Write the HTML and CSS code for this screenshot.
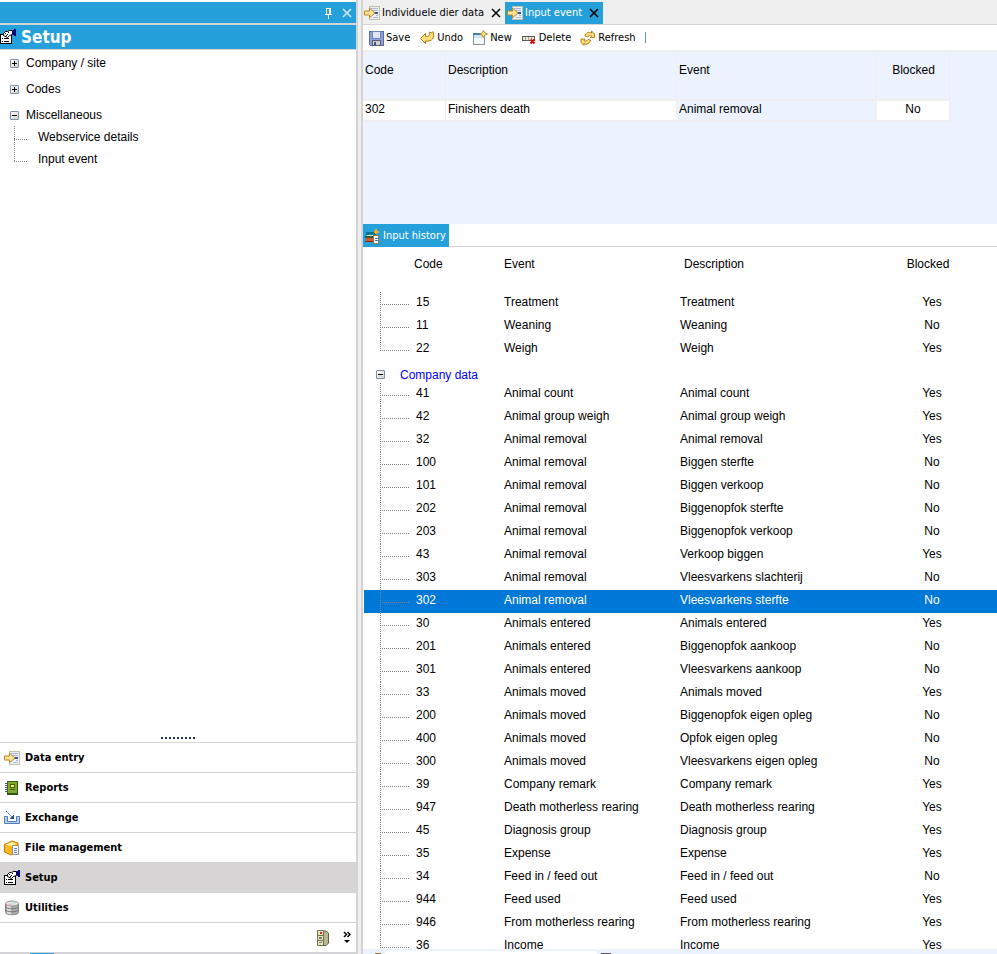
FILE: index.html
```html
<!DOCTYPE html>
<html lang="en">
<head>
<meta charset="utf-8">
<title>Setup - Input event</title>
<link rel="stylesheet" href="styles.css">
</head>
<body>
<svg class="sprite" aria-hidden="true">
  <symbol id="i-setup" viewBox="0 0 16 16" shape-rendering="crispEdges">
    <path fill="#fff" d="M1 5h10v10H1z"/><path fill="none" stroke="#000" d="M.5 5.500h11v9H.5z"/>
    <path fill="#fff" stroke="#000" shape-rendering="auto" d="M3.500 4.500l2-2h2l2-1h3v4l-3 1-2 2-4-2z"/>
    <path stroke="#000" fill="none" d="M5 4.500h1M7 5.500h1M6 6.500h1M8 3.500h1"/>
    <path stroke="#000" fill="none" d="M2 9.500h1M4 9.500h5M2 12.500h1M4 12.500h5"/>
    <path fill="#00008b" d="M13 1h1V0h2v7h-2V6h-1z"/>
  </symbol>
  <symbol id="i-entry" viewBox="0 0 16 16" shape-rendering="crispEdges">
    <path fill="#e9eef8" d="M5 1h10v14H5z"/><path fill="none" stroke="#c9c3a6" d="M5.500 1.500h10v13h-10z"/>
    <path stroke="#a9bbdc" fill="none" d="M7 3.500h7M8 5.500h6M12 10.500h2M9 12.500h5"/>
    <path fill="#2c5c9d" d="M11 7h3v2h-3z"/>
    <path shape-rendering="auto" fill="#ffe49a" stroke="#c08422" d="M.5 6h5V3.200L11 8l-5.500 4.800V10h-5z"/>
  </symbol>
  <symbol id="i-report" viewBox="0 0 16 16" shape-rendering="crispEdges">
    <path fill="#80a82c" stroke="#43661b" d="M3.500 1.500h10v12h-10z"/><path fill="#2e5613" d="M3 13h11v2H3zM13 2h1v12h-1z"/>
    <path fill="#ffeb64" stroke="#4b6110" d="M6.500 4.500h4v3h-4z"/><path stroke="#4b6110" d="M6 9.500h5"/>
    <path stroke="#555" d="M1 3.500h3M1 5.500h3M1 7.500h3M1 9.500h3M1 11.500h3"/>
  </symbol>
  <symbol id="i-exchange" viewBox="0 0 16 16">
    <path fill="#b7cdea" stroke="#527fb5" d="M.5 6.500h3v5h9v-5h3v7H.5z"/>
    <path stroke="#28649b" stroke-dasharray="1.500 1" d="M2 1l6 6"/><path fill="#1c548d" d="M10 4.500V9H5.500z"/>
  </symbol>
  <symbol id="i-file" viewBox="0 0 16 16">
    <path fill="#ffba20" stroke="#c77c05" d="M.5 4.500L8 1l6 2v8l-7 4-6.500-3z"/><path fill="#fff0a0" d="M1.500 4.500L8 2l5 1.500L7.500 6z"/>
    <path fill="#f39a0b" d="M7.500 6.500L14 4v7l-6.500 4z"/>
    <path fill="#f1f5fc" stroke="#9a9687" d="M8.500 5.500h6v9h-6z"/><path stroke="#6086c4" d="M10 8.500h3M10 10.500h3M10 12.500h3"/>
  </symbol>
  <symbol id="i-db" viewBox="0 0 16 16">
    <path fill="#aaa" stroke="#888" d="M1.500 3.500v9c0 3 13 3 13 0v-9"/>
    <path fill="#dcdcdc" d="M3 5h4v9.500l-4-1z"/><ellipse cx="8" cy="3.500" rx="6.500" ry="2.500" fill="#e3e3e3" stroke="#929292"/>
    <path fill="#a9dce2" d="M8 3.500l5-1.500-3-1z"/><path fill="#edb7b9" d="M8 3.500L3 5l3 1z"/>
    <path fill="none" stroke="#777" d="M1.500 6.500c0 3 13 3 13 0M1.500 9.500c0 3 13 3 13 0"/>
  </symbol>
  <symbol id="i-save" viewBox="0 0 16 16" shape-rendering="crispEdges">
    <path fill="#8b9fd9" stroke="#5a6ba8" d="M1.500 1.500h14v14h-13l-1-1z"/><path fill="#dfe3f3" stroke="#7386b7" d="M4.500 1.500h8v7h-8z"/>
    <path fill="#d2d2c7" stroke="#555f78" d="M4.500 10.500h8v5h-8z"/><path fill="#40528f" d="M6 12h2v3H6z"/>
  </symbol>
  <symbol id="i-undo" viewBox="0 0 16 16">
    <path fill="#ffe07a" stroke="#b27b13" d="M1.500 8.500l5-5v3c3 .5 4.500-.5 4-4.500l2 1 1.500-1.500c2 6-.5 10.500-7.500 9.500v2.500z"/>
  </symbol>
  <symbol id="i-new" viewBox="0 0 16 16" shape-rendering="crispEdges">
    <path fill="#f3f8fd" stroke="#8d9690" d="M1.500 3.500h11v11h-11z"/><path fill="#3f7db6" d="M1 3h9v2H1z"/>
    <path fill="#cfe4f6" d="M2 5h9v3H2z"/>
    <path shape-rendering="auto" fill="#ffe88b" stroke="#b68a24" d="M11.500.5l1.200 2.300 2.800 1.200-2.800 1.200-1.200 2.300-1.200-2.300L7.500 4l2.800-1.200z"/>
  </symbol>
  <symbol id="i-delete" viewBox="0 0 16 16" shape-rendering="crispEdges">
    <path fill="#e9eadb" stroke="#5b5d4e" d="M1.500 6.500h12v4h-12z"/><path stroke="#a2a492" d="M4.500 7v3M7.500 7v3M10.500 7v3"/>
    <path shape-rendering="auto" stroke="#e00d12" stroke-width="2" d="M9.500 9.500l4 4M13.500 9.500l-4 4"/>
  </symbol>
  <symbol id="i-refresh" viewBox="0 0 16 16">
    <path fill="#ffe07a" stroke="#b27b13" d="M5 6c1-3.500 4-4.500 6.500-3V1l3 3v3.500h-4l1-1.500c-1.500-1-3-.5-4 1zM10.500 10c-1 4-4 5-6.500 3.500v2l-3-3V9h4l-1 1.500c1.500 1 3 .5 4-1z"/>
  </symbol>
  <symbol id="i-history" viewBox="0 0 16 16" shape-rendering="crispEdges">
    <path fill="#0c7690" d="M1 4h10v3H1z"/><path fill="#e8e5c5" d="M2 7h8v1H2z"/><path fill="#285e37" d="M0 8h10v2H0z"/>
    <path fill="#da5525" d="M1 10h9v3H1z"/><path fill="#8a2b13" d="M0 13h10v1H0z"/>
    <path fill="#f5ad1c" d="M10 1h2v2h2v2h-2v1h-2V5H9V3h1z"/>
    <path fill="#fff" stroke="#8c7d50" d="M8.500 7.500h5v8h-5z"/><path stroke="#417cb7" d="M10 10.500h3M10 12.500h3"/>
  </symbol>
  <symbol id="i-cabinet" viewBox="0 0 16 16">
    <path fill="#b9b78f" stroke="#5e5d3f" d="M8 1h3l2.500 2v10L11 15.500H8z"/><path fill="#e8e6c5" stroke="#74724e" d="M2.500.5h6v15h-6z"/>
    <path stroke="#74724e" d="M3 5.500h5M3 10.500h5"/><path fill="#e82b1d" d="M5 2h2v2H5z"/><path fill="#777" d="M4 7h3v2H4zM4 12h3v1H4z"/>
  </symbol>
  <symbol id="i-x" viewBox="0 0 10 10"><path fill="none" stroke="currentColor" stroke-width="1.500" d="M1 1l8 8M9 1L1 9"/></symbol>
  <symbol id="i-pin" viewBox="0 0 8 12" shape-rendering="crispEdges"><path fill="none" stroke="#fff" d="M2.500 7V1.500h4V7M5.500 1v6M1 7.500h7M4.500 8v4"/></symbol>
  <symbol id="i-more" viewBox="0 0 8 13"><path fill="none" stroke="#000" stroke-width="1.500" d="M1 1l2.500 2.500L1 6M4.500 1L7 3.500 4.500 6"/><path d="M1 9h6l-3 3z"/></symbol>
</svg>

<div class="app">
  <aside class="side">
    <div class="dockbar">
      <button aria-label="Pin"><svg class="pin"><use href="#i-pin"/></svg></button>
      <button aria-label="Close panel"><svg class="cross"><use href="#i-x"/></svg></button>
    </div>
    <h1 class="side-title"><svg class="ico"><use href="#i-setup"/></svg>Setup</h1>
    <ul class="tree">
      <li><button class="node"><span class="box plus"></span>Company / site</button></li>
      <li><button class="node"><span class="box plus"></span>Codes</button></li>
      <li><button class="node"><span class="box"></span>Miscellaneous</button>
        <ul class="leaves">
          <li><a href="#webservice">Webservice details</a></li>
          <li><a href="#input-event">Input event</a></li>
        </ul>
      </li>
    </ul>
    <div class="grip"></div>
    <nav class="nav">
      <button><svg class="ico"><use href="#i-entry"/></svg>Data entry</button>
      <button><svg class="ico"><use href="#i-report"/></svg>Reports</button>
      <button><svg class="ico"><use href="#i-exchange"/></svg>Exchange</button>
      <button><svg class="ico"><use href="#i-file"/></svg>File management</button>
      <button class="current"><svg class="ico"><use href="#i-setup"/></svg>Setup</button>
      <button><svg class="ico"><use href="#i-db"/></svg>Utilities</button>
    </nav>
    <div class="side-foot">
      <button aria-label="Archive"><svg class="ico"><use href="#i-cabinet"/></svg></button>
      <button aria-label="More"><svg class="more"><use href="#i-more"/></svg></button>
    </div>
    <div class="side-edge"></div>
  </aside>

  <main class="main">
    <div class="tabs">
      <div class="tab"><button><svg class="ico"><use href="#i-entry"/></svg>Individuele dier data</button><button aria-label="Close Individuele dier data"><svg class="cross"><use href="#i-x"/></svg></button></div>
      <div class="tab active"><button><svg class="ico"><use href="#i-entry"/></svg>Input event</button><button aria-label="Close Input event"><svg class="cross"><use href="#i-x"/></svg></button></div>
    </div>
    <div class="toolbar">
      <button><svg class="ico"><use href="#i-save"/></svg>Save</button>
      <button><svg class="ico"><use href="#i-undo"/></svg>Undo</button>
      <button><svg class="ico"><use href="#i-new"/></svg>New</button>
      <button><svg class="ico"><use href="#i-delete"/></svg>Delete</button>
      <button><svg class="ico"><use href="#i-refresh"/></svg>Refresh</button>
      <span class="sep"></span>
    </div>
    <form class="editor">
      <div class="field"><label for="code">Code</label><input id="code" value="302"></div>
      <div class="field"><label for="desc">Description</label><input id="desc" value="Finishers death"></div>
      <div class="field"><label for="event">Event</label><input id="event" class="fixed" value="Animal removal" readonly></div>
      <div class="field mid"><label for="blocked">Blocked</label><input id="blocked" value="No"></div>
    </form>
    <div class="subtabs"><button><svg class="ico"><use href="#i-history"/></svg>Input history</button></div>
    <div class="history">
      <table>
        <colgroup><col class="c-tree"><col class="c-code"><col class="c-event"><col class="c-desc"><col class="c-block"><col></colgroup>
        <thead><tr><td></td><th>Code</th><th>Event</th><th>Description</th><th>Blocked</th><td></td></tr></thead>
        <tbody>
          <tr><td></td><td>15</td><td>Treatment</td><td>Treatment</td><td>Yes</td><td></td></tr>
          <tr><td></td><td>11</td><td>Weaning</td><td>Weaning</td><td>No</td><td></td></tr>
          <tr class="last"><td></td><td>22</td><td>Weigh</td><td>Weigh</td><td>Yes</td><td></td></tr>
        </tbody>
        <tbody>
          <tr class="group"><th colspan="6"><button><span class="box"></span>Company data</button></th></tr>
          <tr><td></td><td>41</td><td>Animal count</td><td>Animal count</td><td>Yes</td><td></td></tr>
          <tr><td></td><td>42</td><td>Animal group weigh</td><td>Animal group weigh</td><td>Yes</td><td></td></tr>
          <tr><td></td><td>32</td><td>Animal removal</td><td>Animal removal</td><td>Yes</td><td></td></tr>
          <tr><td></td><td>100</td><td>Animal removal</td><td>Biggen sterfte</td><td>No</td><td></td></tr>
          <tr><td></td><td>101</td><td>Animal removal</td><td>Biggen verkoop</td><td>No</td><td></td></tr>
          <tr><td></td><td>202</td><td>Animal removal</td><td>Biggenopfok sterfte</td><td>No</td><td></td></tr>
          <tr><td></td><td>203</td><td>Animal removal</td><td>Biggenopfok verkoop</td><td>No</td><td></td></tr>
          <tr><td></td><td>43</td><td>Animal removal</td><td>Verkoop biggen</td><td>Yes</td><td></td></tr>
          <tr><td></td><td>303</td><td>Animal removal</td><td>Vleesvarkens slachterij</td><td>No</td><td></td></tr>
          <tr class="selected"><td></td><td>302</td><td>Animal removal</td><td>Vleesvarkens sterfte</td><td>No</td><td></td></tr>
          <tr><td></td><td>30</td><td>Animals entered</td><td>Animals entered</td><td>Yes</td><td></td></tr>
          <tr><td></td><td>201</td><td>Animals entered</td><td>Biggenopfok aankoop</td><td>No</td><td></td></tr>
          <tr><td></td><td>301</td><td>Animals entered</td><td>Vleesvarkens aankoop</td><td>No</td><td></td></tr>
          <tr><td></td><td>33</td><td>Animals moved</td><td>Animals moved</td><td>Yes</td><td></td></tr>
          <tr><td></td><td>200</td><td>Animals moved</td><td>Biggenopfok eigen opleg</td><td>No</td><td></td></tr>
          <tr><td></td><td>400</td><td>Animals moved</td><td>Opfok eigen opleg</td><td>No</td><td></td></tr>
          <tr><td></td><td>300</td><td>Animals moved</td><td>Vleesvarkens eigen opleg</td><td>No</td><td></td></tr>
          <tr><td></td><td>39</td><td>Company remark</td><td>Company remark</td><td>Yes</td><td></td></tr>
          <tr><td></td><td>947</td><td>Death motherless rearing</td><td>Death motherless rearing</td><td>Yes</td><td></td></tr>
          <tr><td></td><td>45</td><td>Diagnosis group</td><td>Diagnosis group</td><td>Yes</td><td></td></tr>
          <tr><td></td><td>35</td><td>Expense</td><td>Expense</td><td>Yes</td><td></td></tr>
          <tr><td></td><td>34</td><td>Feed in / feed out</td><td>Feed in / feed out</td><td>No</td><td></td></tr>
          <tr><td></td><td>944</td><td>Feed used</td><td>Feed used</td><td>Yes</td><td></td></tr>
          <tr><td></td><td>946</td><td>From motherless rearing</td><td>From motherless rearing</td><td>Yes</td><td></td></tr>
          <tr class="last"><td></td><td>36</td><td>Income</td><td>Income</td><td>Yes</td><td></td></tr>
        </tbody>
      </table>
    </div>
    <div class="status"><i class="tip amber"></i><span></span><i class="tip grey"></i></div>
  </main>
</div>
</body>
</html>
```
FILE: styles.css
```css
:root {
  --blue: #26a0da;
  --line: #d4d4d6;
  --pale: #ecf3fe;
  --chrome: #efeff0;
  --ui: "DejaVu Sans Condensed", Tahoma, sans-serif;
}
* { box-sizing: border-box; }
body {
  margin: 0;
  background: var(--chrome);
  color: #000;
  font: 12px/16px "Liberation Sans", Arial, sans-serif;
}
button, input { font: inherit; color: inherit; }
button {
  display: flex;
  align-items: center;
  padding: 0;
  border: 0;
  background: none;
  white-space: nowrap;
}
a { color: inherit; text-decoration: none; }
ul { margin: 0; padding: 0; list-style: none; }
.sprite { position: absolute; width: 0; height: 0; }
.ico { width: 16px; height: 16px; flex: none; }
.cross { width: 10px; height: 10px; }
.pin { width: 8px; height: 12px; }
.more { width: 8px; height: 13px; }

.app {
  display: grid;
  grid-template-columns: 358px minmax(0, 1fr);
  gap: 3px;
  height: 100vh;
  overflow: hidden;
}

/* Left panel */
.side {
  display: flex;
  flex-direction: column;
  min-height: 0;
  padding-top: 2px;
  background: #fff;
  border-right: 2px solid var(--line);
}
.dockbar {
  display: flex;
  justify-content: flex-end;
  gap: 10px;
  height: 21px;
  padding-right: 4px;
  background: var(--blue);
  color: #d5ebf6;
}
.side-title {
  display: flex;
  align-items: center;
  gap: 5px;
  height: 27px;
  margin: 0;
  border-top: 2px solid var(--line);
  border-bottom: 1px solid var(--line);
  background: var(--blue);
  color: #fff;
  font: bold 17px/20px var(--ui);
}
.tree { flex: 1; min-height: 0; }
.node { gap: 7px; height: 26px; padding-left: 10px; }
.box {
  width: 9px;
  height: 9px;
  flex: none;
  border: 1px solid #7b91ad;
  border-radius: 1px;
  background:
    linear-gradient(#000, #000) center / 5px 1px no-repeat,
    linear-gradient(135deg, #fff, #d4d0c8);
}
.box.plus {
  background:
    linear-gradient(#000, #000) center / 5px 1px no-repeat,
    linear-gradient(#000, #000) center / 1px 5px no-repeat,
    linear-gradient(135deg, #fff, #d4d0c8);
}
.leaves { margin: -2px 0 0 14px; }
.leaves li {
  height: 22px;
  padding-left: 24px;
  line-height: 22px;
  background:
    repeating-linear-gradient(#808080 0 1px, transparent 1px 2px) 0 0 / 1px 100% no-repeat,
    repeating-linear-gradient(90deg, #808080 0 1px, transparent 1px 2px) 0 13px / 13px 1px no-repeat;
}
.leaves li:last-child { background-size: 1px 13px, 13px 1px; }
.grip {
  align-self: center;
  width: 34px;
  height: 2px;
  margin-bottom: 3px;
  background: repeating-linear-gradient(90deg, #26304e 0 2px, transparent 2px 4px);
}
.nav { font: bold 11px/16px var(--ui); }
.nav button {
  gap: 5px;
  width: 100%;
  height: 30px;
  padding-left: 4px;
  border-top: 1px solid var(--line);
}
.nav .current { background: #d6d4d5; }
.side-foot {
  display: flex;
  justify-content: flex-end;
  gap: 12px;
  height: 30px;
  padding-right: 5px;
  border-top: 1px solid var(--line);
}
.side-edge {
  height: 2px;
  background: linear-gradient(var(--blue), var(--blue)) 30px 1px / 24px 1px no-repeat, var(--line);
}

/* Right panel */
.main {
  display: flex;
  flex-direction: column;
  min-height: 0;
  padding-top: 2px;
  border-left: 2px solid var(--line);
}
.tabs {
  display: flex;
  height: 23px;
  border-bottom: 1px solid var(--line);
  font: 11px/16px var(--ui);
}
.tab { display: flex; gap: 7px; padding: 0 4px 0 1px; }
.tab button { gap: 2px; }
.tab.active { padding-left: 2px; background: var(--blue); color: #fff; }
.tab.active .cross { color: #000; }
.toolbar {
  display: flex;
  align-items: center;
  gap: 9px;
  height: 25px;
  padding-left: 5px;
  background: #fff;
  font: 11px/16px var(--ui);
}
.toolbar button { gap: 2px; }
.sep { width: 1px; height: 11px; background: #6d8fbd; }
.editor {
  display: grid;
  grid-template-columns: 83px 231px 200px 73px;
  height: 174px;
  padding-top: 2px;
  border-top: 2px solid var(--chrome);
  background: var(--pale);
  align-items: start;
}
.field {
  display: flex;
  flex-direction: column;
  border-right: 1px solid var(--chrome);
  border-bottom: 2px solid var(--chrome);
}
.field label {
  height: 47px;
  padding: 8px 1px 0 2px;
  border-bottom: 2px solid var(--chrome);
}
.field input {
  width: 100%;
  height: 19px;
  padding: 0 2px 3px;
  border: 0;
  background: #fff;
}
.field .fixed { background: var(--pale); }
.mid { text-align: center; }
.mid input { text-align: center; }
.subtabs {
  height: 23px;
  border-bottom: 1px solid var(--line);
  background: #fff;
  font: 11px/16px var(--ui);
}
.subtabs button {
  gap: 2px;
  height: 23px;
  padding: 0 3px 0 2px;
  background: var(--blue);
  color: #fff;
}
.history {
  flex: 1;
  min-height: 0;
  overflow: hidden;
  padding-left: 1px;
  background: #fff;
}
table { width: 100%; border-collapse: collapse; table-layout: fixed; }
.c-tree { width: 50px; }
.c-code { width: 90px; }
.c-event { width: 176px; }
.c-desc { width: 216px; }
.c-block { width: 72px; }
td, th {
  height: 23px;
  padding: 0 0 4px 2px;
  text-align: left;
  font-weight: normal;
  line-height: 14px;
  white-space: nowrap;
}
td:nth-child(3), th:nth-child(3) { padding-left: 0; }
td:nth-child(4) { padding-left: 0; }
th:nth-child(4) { padding-left: 4px; }
td:nth-child(5), th:nth-child(5) { padding-left: 0; text-align: center; }
th:nth-child(2) { padding-left: 0; }
thead th, thead td { height: 45px; padding-top: 10px; vertical-align: top; }
thead th:nth-child(5) { padding-right: 8px; }
tbody td:first-child {
  background:
    repeating-linear-gradient(#808080 0 1px, transparent 1px 2px) 16px 0 / 1px 100% no-repeat,
    repeating-linear-gradient(90deg, #808080 0 1px, transparent 1px 2px) 16px 12px / 29px 1px no-repeat;
}
tbody .last td:first-child { background-size: 1px 12px, 29px 1px; }
.group th { height: 22px; padding: 0; }
.group button {
  gap: 15px;
  height: 22px;
  padding: 6px 0 0 12px;
  color: #0000ff;
}
.group .box { margin-bottom: 2px; }
.selected { background: #0078d7; color: #fff; }
.status {
  display: flex;
  align-items: flex-end;
  gap: 4px;
  height: 5px;
  padding-left: 12px;
  background: var(--pale);
}
.status span { width: 212px; height: 3px; background: #fff; }
.tip { width: 6px; height: 1px; }
.tip.amber { background: #a5793c; }
.tip.grey { width: 10px; background: #5c5868; }
```
